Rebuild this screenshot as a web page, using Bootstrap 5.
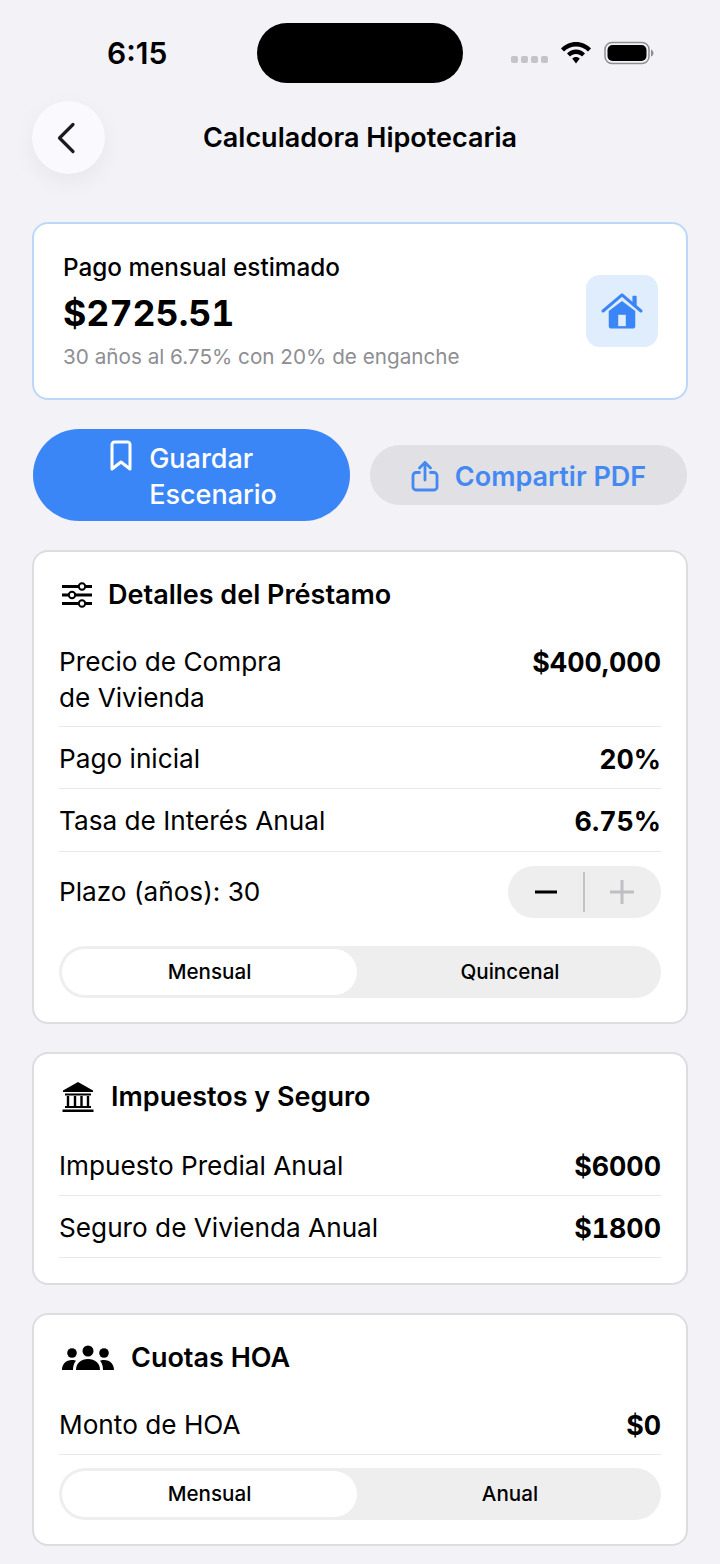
<!DOCTYPE html>
<html lang="es">
<head>
<meta charset="utf-8">
<title>Calculadora Hipotecaria</title>
<link rel="stylesheet" href="https://cdn.jsdelivr.net/npm/bootstrap@5.3.0/dist/css/bootstrap.min.css">
<style>
html,body{height:1564px;overflow:hidden}
body{background:#f2f2f7;font-family:Inter,"Liberation Sans",sans-serif;color:#000;padding:0 32px}
.status-strip{height:101px;padding:23px 0 18px 0}
.clock{flex:0 0 225px;font-size:30px;font-weight:600;line-height:60px;padding-left:75px}
.island{width:206px;height:60px;background:#000;border-radius:30px;flex:none}
.sys-icons{flex:0 0 225px;height:60px;padding-left:48px;gap:12px}
.sig-dots{gap:3px;margin-top:13px}
.sig-dots i{display:block;width:7px;height:7px;border-radius:2px;background:#c4c4c8}
.head-bar{height:73px}
.back-round{width:73px;height:73px;border-radius:50%;background:#faf9fe;box-shadow:0 8px 24px rgba(0,0,0,.05);border:0;padding:0 5px 0 0;flex:none}
.head-title{font-size:27px;font-weight:600;margin:0;flex:1;text-align:center;padding:2px 73px 0 0}
.panel{background:#fff;border:2px solid #dcdce1;border-radius:16px}
.panel-hero{border-color:#bcd8f8;margin-top:48px;height:178px;padding:0 28px 0 29px}
.hero-label{font-size:24.3px;font-weight:500;line-height:32px}
.hero-value{font-size:35.7px;font-weight:700;line-height:46px;margin:7px 0 7px;font-variant-numeric:tabular-nums}
.hero-note{font-size:20.7px;line-height:28px;color:#8e8e93}
.hero-tile{width:72px;height:72px;border-radius:14px;background:#e0edfc}
.action-row{margin-top:29px;gap:20px;height:92px;padding:0 1px}
.act{flex:0 0 317px;border:0;font-size:27px;font-weight:500;line-height:36px;border-radius:46px}
.act-main{background:#3b86f7;color:#fff;height:92px;padding:0 0 0 3px}
.act-main span{padding-top:4px}
.act-alt{background:#e0e0e5;color:#4489f1;height:60px;font-weight:600;padding-top:3px}
.act-alt span{padding-top:2px}
.mark-ico{margin:11px 16px 0 0}
.share-ico{margin-right:16px}
.panel-body-wrap{padding:25px 25px;margin-top:29px}
.p-loan{height:474px}
.p-short{height:233px;margin-top:28px}
.panel-head{font-size:27px;font-weight:600;line-height:36px;margin:0}
.head-row{gap:17px}
.head-loan{gap:16px;margin-bottom:31px}
.head-tax{margin-bottom:23px}
.head-hoa{margin-bottom:21px}
.ico-off{margin-left:3px}
.line-item{border-bottom:1px solid #e9e9ec;font-size:26.2px;line-height:36px}
.line-item b{font-weight:700;font-size:26.8px;font-variant-numeric:tabular-nums}
.ln-a{padding-bottom:10px}
.ln-b{padding:14px 0 11px}
.ln-c{padding:14px 0 12px}
.ln-d{padding:10px 0 11px}
.plain-row{margin-top:14px;font-size:26.2px}
.stepper{width:153px;height:52px;border-radius:26px;background:#eeeeef;padding:0 27px}
.step-div{width:2px;height:40px;background:#c4c4c6}
.seg{height:52px;border-radius:26px;background:#eeeeef;padding:3px;font-size:20.6px;font-weight:500}
.seg span{flex:1 1 0;text-align:center;line-height:46px}
.seg span:not(.on){padding-left:5px}
.seg .on{flex:0 0 295px;background:#fff;border-radius:23px}
.seg-a{margin-top:28px}
.seg-b{margin-top:13px}
</style>
</head>
<body>
<div class="status-strip d-flex align-items-start">
  <div class="clock">6:15</div>
  <div class="island"></div>
  <div class="sys-icons d-flex align-items-center">
    <div class="sig-dots d-flex"><i></i><i></i><i></i><i></i></div>
    <svg width="32" height="24" viewBox="0 0 32 24"><path d="M16 1C10 1 5 3.500 1 7.500L4 10.500C7.500 7 11.500 5.500 16 5.500S24.500 7 28 10.500L31 7.500C27 3.500 22 1 16 1Z"/><path d="M16 8.500C12.500 8.500 9.500 10 7 12.500L10 15.500C11.500 14 13.500 13 16 13S20.500 14 22 15.500L25 12.500C22.500 10 19.500 8.500 16 8.500Z"/><path d="M16 16C14.500 16 13.200 16.600 12.200 17.500L16 22.500L19.800 17.500C18.800 16.600 17.500 16 16 16Z"/></svg>
    <svg width="50" height="24" viewBox="0 0 50 24"><rect x="1" y="1.500" width="44" height="21" rx="7" fill="none" stroke="#8e8e93" stroke-width="1.500"/><rect x="3.500" y="4" width="39" height="16" rx="5"/><path d="M47 8.500c1.500.5 2.500 2 2.500 3.500s-1 3-2.500 3.500z" fill="#8e8e93"/></svg>
  </div>
</div>

<div class="head-bar d-flex align-items-center">
  <button class="back-round d-flex align-items-center justify-content-center" aria-label="Volver">
    <svg width="22" height="32" viewBox="0 0 22 32"><path d="M18 2.500 4.500 16 18 29.500" fill="none" stroke="#1c1c1e" stroke-width="3.200" stroke-linecap="round" stroke-linejoin="round"/></svg>
  </button>
  <h1 class="head-title">Calculadora Hipotecaria</h1>
</div>

<section class="panel panel-hero d-flex align-items-center justify-content-between">
  <div>
    <div class="hero-label">Pago mensual estimado</div>
    <div class="hero-value">$2725.51</div>
    <div class="hero-note">30 años al 6.75% con 20% de enganche</div>
  </div>
  <div class="hero-tile d-flex align-items-center justify-content-center">
    <svg width="42" height="36" viewBox="0 0 44 38" fill="#3b86f7"><path d="M8 19 22 8.500 36 19V34.500a3 3 0 0 1-3 3H11a3 3 0 0 1-3-3Z"/><rect x="18" y="23" width="8" height="12" fill="#e0edfc"/><path d="M2 19 22 2 42 19" fill="none" stroke="#3b86f7" stroke-width="3.200" stroke-linecap="round" stroke-linejoin="round"/><rect x="33" y="3" width="4.500" height="11" rx="1"/></svg>
  </div>
</section>

<div class="action-row d-flex align-items-center">
  <button class="act act-main d-flex align-items-center justify-content-center">
    <svg class="mark-ico align-self-start" width="24" height="32" viewBox="0 0 24 32"><path d="M3 4.500a2.500 2.500 0 0 1 2.500-2.500h13a2.500 2.500 0 0 1 2.500 2.500V29l-9-7-9 7Z" fill="none" stroke="#fff" stroke-width="3" stroke-linejoin="round"/></svg>
    <span class="text-start">Guardar<br>Escenario</span>
  </button>
  <button class="act act-alt d-flex align-items-center justify-content-center">
    <svg class="share-ico" width="28" height="32" viewBox="0 0 28 32"><path d="M8.500 12.500H5a3 3 0 0 0-3 3V27a3 3 0 0 0 3 3h18a3 3 0 0 0 3-3V15.500a3 3 0 0 0-3-3h-3.500M14 20V2.500M8.500 8 14 2.500 19.500 8" fill="none" stroke="#4489f1" stroke-width="2.800" stroke-linecap="round" stroke-linejoin="round"/></svg>
    <span>Compartir PDF</span>
  </button>
</div>

<section class="panel panel-body-wrap p-loan">
  <div class="d-flex align-items-center head-loan">
    <svg class="ico-off" width="30" height="26" viewBox="0 0 30 26" fill="none" stroke="#000"><path d="M0 4.500H30M0 13H30M0 21.500H30" stroke-width="2.800"/><g fill="#fff" stroke-width="2"><circle cx="20" cy="4.500" r="3.200"/><circle cx="10" cy="13" r="3.200"/><circle cx="20" cy="21.500" r="3.200"/></g></svg>
    <h2 class="panel-head">Detalles del Préstamo</h2>
  </div>
  <div class="line-item ln-a d-flex justify-content-between"><span>Precio de Compra<br>de Vivienda</span><b>$400,000</b></div>
  <div class="line-item ln-b d-flex justify-content-between"><span>Pago inicial</span><b>20%</b></div>
  <div class="line-item ln-c d-flex justify-content-between"><span>Tasa de Interés Anual</span><b>6.75%</b></div>
  <div class="plain-row d-flex justify-content-between align-items-center"><span>Plazo (años): 30</span>
    <div class="stepper d-flex align-items-center justify-content-between">
      <svg width="22" height="4" viewBox="0 0 22 4"><path d="M0 2H22" stroke="#000" stroke-width="3"/></svg>
      <span class="step-div"></span>
      <svg width="24" height="24" viewBox="0 0 24 24"><path d="M0 12H24M12 0V24" stroke="#bfbfc3" stroke-width="3"/></svg>
    </div>
  </div>
  <div class="seg seg-a d-flex"><span class="on">Mensual</span><span>Quincenal</span></div>
</section>

<section class="panel panel-body-wrap p-short">
  <div class="d-flex align-items-center head-row head-tax">
    <svg class="ico-off" width="32" height="32" viewBox="0 0 32 32"><path d="M16 1 31 9.500V11H1V9.500Z"/><path d="M3 12.500H29V14.500H3ZM3 25H29V27H3ZM.5 28.500H31.500V31H.5Z"/><path d="M6 15V25M13 15V25M19.500 15V25M26 15V25" stroke="#000" stroke-width="2.400"/></svg>
    <h2 class="panel-head">Impuestos y Seguro</h2>
  </div>
  <div class="line-item ln-d d-flex justify-content-between"><span>Impuesto Predial Anual</span><b>$6000</b></div>
  <div class="line-item ln-b d-flex justify-content-between"><span>Seguro de Vivienda Anual</span><b>$1800</b></div>
</section>

<section class="panel panel-body-wrap p-short">
  <div class="d-flex align-items-center head-row head-hoa">
    <svg class="ico-off" width="52" height="26" viewBox="0 0 52 26"><circle cx="26" cy="6" r="5.500"/><path d="M14 25c0-7 5-11 12-11s12 4 12 11Z"/><circle cx="10" cy="8" r="4.800"/><circle cx="42" cy="8" r="4.800"/><path d="M0 25c0-6 4-10 10-10 1.800 0 3 .3 4 .8-2 2.200-3 5.500-3 9.200ZM52 25c0-6-4-10-10-10-1.800 0-3 .3-4 .8 2 2.200 3 5.500 3 9.200Z"/></svg>
    <h2 class="panel-head">Cuotas HOA</h2>
  </div>
  <div class="line-item ln-d d-flex justify-content-between"><span>Monto de HOA</span><b>$0</b></div>
  <div class="seg seg-b d-flex"><span class="on">Mensual</span><span>Anual</span></div>
</section>
<script src="https://cdn.jsdelivr.net/npm/bootstrap@5.3.0/dist/js/bootstrap.bundle.min.js"></script>
</body>
</html>
